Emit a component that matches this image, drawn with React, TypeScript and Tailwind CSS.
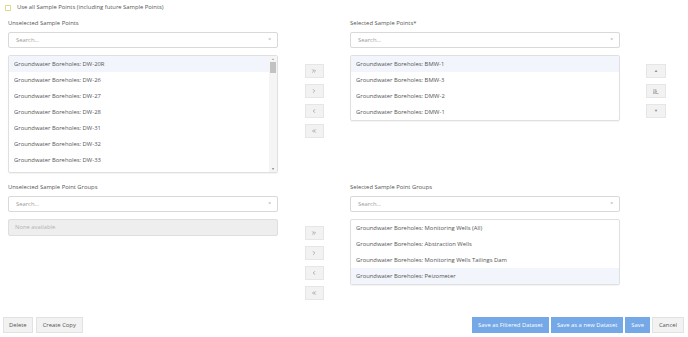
import { ChevronLeft, ChevronRight, ChevronsLeft, ChevronsRight } from "lucide-react";

const unselected = ["DW-20R", "DW-26", "DW-27", "DW-28", "DW-31", "DW-32", "DW-33"];
const selected = ["BMW-1", "BMW-3", "DMW-2", "DMW-1"];
const groups = ["Monitoring Wells (All)", "Abstraction Wells", "Monitoring Wells Tailings Dam", "Peizometer"];

function SearchBox() {
  return (
    <div className="h-[16px] rounded-[2px] border border-[#d9d9d9] bg-white flex items-center justify-between pl-[7px] pr-[6px]">
      <span className="text-[#9a9a9a]">Search...</span>
      <span className="text-[#999] text-[5px]">×</span>
    </div>
  );
}

function Row({ text, active }: { text: string; active?: boolean }) {
  return (
    <div className={`h-[16px] shrink-0 flex items-center pl-[5px] ${active ? "bg-[#f2f6fc]" : ""}`}>
      Groundwater Boreholes: {text}
    </div>
  );
}

function MoveButtons() {
  const icons = [ChevronsRight, ChevronRight, ChevronLeft, ChevronsLeft];
  return (
    <div className="flex flex-col gap-[6px] items-center">
      {icons.map((Icon, i) => (
        <div key={i} className="w-[19px] h-[14px] bg-[#f2f2f2] border border-[#e6e6e6] flex items-center justify-center">
          <Icon className="w-[6px] h-[6px] text-[#888]" strokeWidth={2.5} />
        </div>
      ))}
    </div>
  );
}

export default function App() {
  return (
    <div className="w-[688px] h-[337px] bg-white text-[#555] text-[5.85px] relative" style={{ fontFamily: '"Open Sans", sans-serif' }}>
      {/* use all checkbox */}
      <div className="flex items-center h-[14px] pl-[5px] pt-[1px]">
        <div className="w-[6px] h-[6px] border border-[#e2db8a] bg-white" />
        <span className="ml-[6px]">Use all Sample Points (including future Sample Points)</span>
      </div>

      {/* sample points */}
      <div className="flex pl-[8px] mt-[4px]">
        <div className="w-[270px]">
          <div className="h-[10px] flex items-center">Unselected Sample Points</div>
          <div className="mt-[4px]"><SearchBox /></div>
          <div className="mt-[7px] h-[118px] rounded-[2px] border border-[#e0e0e0] shadow-[0_1px_1px_rgba(0,0,0,0.05)] flex overflow-hidden">
            <div className="flex-1 flex flex-col overflow-hidden">
              {unselected.map((s, i) => (
                <Row key={s} text={s} active={i === 0} />
              ))}
            </div>
            <div className="w-[8px] bg-[#f5f5f5] flex flex-col items-center">
              <div className="h-[6px] flex items-center text-[#999] text-[3px]">▲</div>
              <div className="w-[6px] h-[11px] bg-[#c2c2c2]" />
              <div className="flex-1" />
              <div className="h-[6px] flex items-center text-[#555] text-[3px]">▼</div>
            </div>
          </div>
        </div>

        <div className="w-[72px] pt-[46px] flex justify-center">
          <MoveButtons />
        </div>

        <div className="w-[270px]">
          <div className="h-[10px] flex items-center">Selected Sample Points*</div>
          <div className="mt-[4px]"><SearchBox /></div>
          <div className="mt-[7px] rounded-[2px] border border-[#e0e0e0] shadow-[0_1px_1px_rgba(0,0,0,0.05)] flex flex-col">
            {selected.map((s, i) => (
              <Row key={s} text={s} active={i === 0} />
            ))}
          </div>
        </div>

        <div className="ml-[26px] pt-[46px] flex flex-col gap-[6px]">
          <div className="w-[20px] h-[14px] bg-[#f2f2f2] border border-[#e6e6e6] flex items-center justify-center text-[#888] text-[4px]">▲</div>
          <div className="w-[20px] h-[14px] bg-[#f2f2f2] border border-[#e6e6e6] flex items-center justify-center">
            <svg width="6" height="5" viewBox="0 0 14 12" fill="none" stroke="#888" strokeWidth="1.6">
              <path d="M2 0v11M0 8.5l2 2.5 2-2.5" />
              <path d="M6 11h7M6.5 0v11M6.5 6h3" />
            </svg>
          </div>
          <div className="w-[20px] h-[14px] bg-[#f2f2f2] border border-[#e6e6e6] flex items-center justify-center text-[#888] text-[4px]">▼</div>
        </div>
      </div>

      {/* groups */}
      <div className="flex pl-[8px] mt-[9px]">
        <div className="w-[270px]">
          <div className="h-[10px] flex items-center">Unselected Sample Point Groups</div>
          <div className="mt-[4px]"><SearchBox /></div>
          <div className="mt-[7px] h-[17px] rounded-[2px] border border-[#dedede] bg-[#eeeeee] flex items-center pl-[6px] text-[#b3b3b3]">
            None available
          </div>
        </div>

        <div className="w-[72px] pt-[44px] flex justify-center">
          <MoveButtons />
        </div>

        <div className="w-[270px]">
          <div className="h-[10px] flex items-center">Selected Sample Point Groups</div>
          <div className="mt-[4px]"><SearchBox /></div>
          <div className="mt-[7px] rounded-[2px] border border-[#e0e0e0] shadow-[0_1px_1px_rgba(0,0,0,0.05)] flex flex-col">
            {groups.map((s, i) => (
              <Row key={s} text={s} active={i === 3} />
            ))}
          </div>
        </div>
      </div>

      {/* footer */}
      <div className="absolute left-0 right-0 bottom-[4px] flex items-center justify-between px-[3px]">
        <div className="flex gap-[3px]">
          <div className="h-[16px] px-[5px] bg-[#f2f2f2] border border-[#e2e2e2] flex items-center">Delete</div>
          <div className="h-[16px] px-[6px] bg-[#f2f2f2] border border-[#e2e2e2] flex items-center">Create Copy</div>
        </div>
        <div className="flex gap-[2px] pr-[1px]">
          <div className="h-[16px] px-[6px] bg-[#74a8e6] text-white flex items-center">Save as Filtered Dataset</div>
          <div className="h-[16px] px-[6px] bg-[#74a8e6] text-white flex items-center">Save as a new Dataset</div>
          <div className="h-[16px] px-[6px] bg-[#74a8e6] text-white flex items-center">Save</div>
          <div className="h-[16px] px-[6px] bg-[#f2f2f2] border border-[#e2e2e2] flex items-center">Cancel</div>
        </div>
      </div>
    </div>
  );
}
